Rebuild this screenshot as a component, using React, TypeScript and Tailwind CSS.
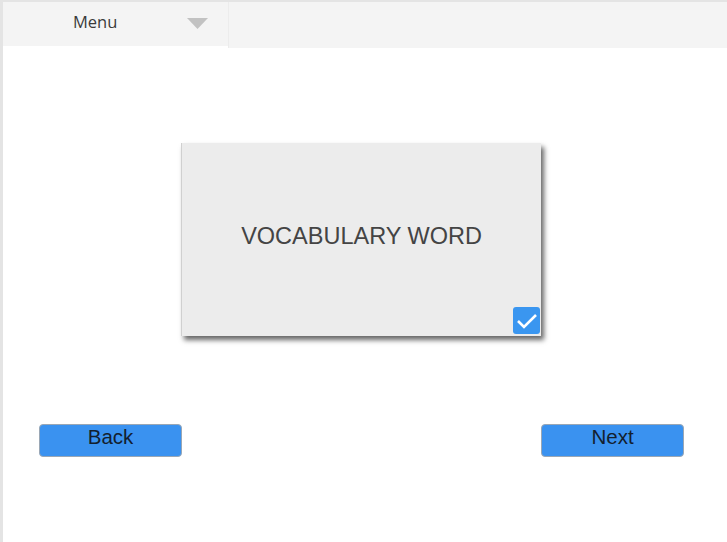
import React from "react";

export default function App() {
  return (
    <div className="w-[727px] h-[542px] bg-white relative overflow-hidden border-l-[3px] border-t-[2px] border-[#e4e4e4]" style={{ fontFamily: '"Liberation Sans", Arial, sans-serif' }}>
      <div className="flex h-[46px]">
        <div className="w-[225px] h-[44px] bg-[#f4f4f4] flex items-center relative">
          <span className="ml-[70px] mb-[4px] text-[16.5px] text-[#3a3a3a]" style={{ fontFamily: '"Open Sans", sans-serif' }}>Menu</span>
          <svg className="absolute left-[184px] top-[16px]" width="21" height="11" viewBox="0 0 21 11">
            <polygon points="0,0 21,0 10.5,11" fill="#c2c2c2" />
          </svg>
        </div>
        <div className="flex-1 h-[46px] bg-[#f4f4f4] border-l border-[#ececec]"></div>
      </div>
      <div className="flex justify-center pt-[95px] pr-[8px]">
        <div className="w-[360px] h-[193px] bg-[#ececec] relative flex items-center justify-center shadow-[3px_4px_5px_rgba(0,0,0,0.6)] border-l border-[#d0d0d0]">
          <span className="text-[23.5px] text-[#444] pb-[6px]">VOCABULARY WORD</span>
          <div className="absolute right-[1px] bottom-[2px] w-[27px] h-[27px] rounded-[3px] bg-[#3a96f0] flex items-center justify-center">
            <svg width="22" height="18" viewBox="0 0 22 18">
              <polyline points="2,9 8,15 20,3" fill="none" stroke="white" strokeWidth="2.6" />
            </svg>
          </div>
        </div>
      </div>
      <div className="flex justify-between pl-[36px] pr-[43px] mt-[88px]">
        <button className="w-[143px] h-[33px] bg-[#3a92f0] rounded-[4px] border border-[#9aa7b5] text-[20.5px] text-[#13202e] leading-none pb-[7px]">Back</button>
        <button className="w-[143px] h-[33px] bg-[#3a92f0] rounded-[4px] border border-[#9aa7b5] text-[20.5px] text-[#13202e] leading-none pb-[7px]">Next</button>
      </div>
    </div>
  );
}
